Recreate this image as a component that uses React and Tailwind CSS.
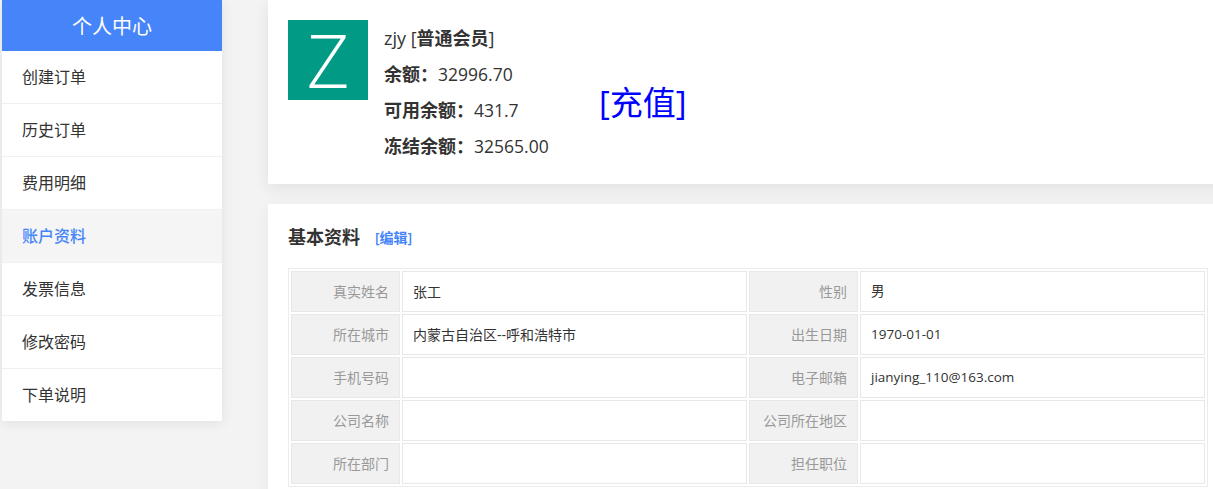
import React from "react";

const menuItems = ["创建订单", "历史订单", "费用明细", "账户资料", "发票信息", "修改密码", "下单说明"];

const rows = [
  ["真实姓名", "张工", "性别", "男"],
  ["所在城市", "内蒙古自治区--呼和浩特市", "出生日期", "1970-01-01"],
  ["手机号码", "", "电子邮箱", "jianying_110@163.com"],
  ["公司名称", "", "公司所在地区", ""],
  ["所在部门", "", "担任职位", ""],
];

const App = () => {
  return (
    <div className="h-[489px] overflow-hidden bg-[#f3f3f3] flex items-start pl-[2px] text-[#333] font-['Open_Sans','Noto_Sans_CJK_SC',sans-serif]">
      {/* Sidebar */}
      <div className="w-[220px] shrink-0 bg-white shadow-[0_2px_12px_rgba(0,0,0,0.08)]">
        <div className="h-[51px] pt-0.5 bg-[#4585f9] text-white text-[20px] flex items-center justify-center">个人中心</div>
        {menuItems.map((item, i) => (
          <div
            key={item}
            className={`pl-5 flex items-center text-[16px] border-[#f0f0f0] ${i < menuItems.length - 1 ? "h-[53px] border-b-[1px]" : "h-[52px]"} ${item === "账户资料" ? "bg-[#f5f5f5] text-[#4585f9] font-medium" : ""}`}
          >
            {item}
          </div>
        ))}
      </div>

      {/* Main */}
      <div className="ml-[46px] w-[960px] shrink-0">
        <div className="h-[184px] bg-white shadow-[0_4px_16px_rgba(0,0,0,0.08)] px-5 pt-5 flex">
          <div className="w-20 h-20 bg-[#009a85] text-white text-[74px] font-light flex items-center justify-center leading-none">Z</div>
          <div className="ml-4 w-[215px] text-[18px] leading-[36px]">
            <div>zjy [<span className="font-semibold">普通会员</span>]</div>
            <div className="font-semibold">余额：<span className="text-[17.5px] font-normal leading-none">32996.70</span></div>
            <div className="font-semibold">可用余额：<span className="text-[17.5px] font-normal leading-none">431.7</span></div>
            <div className="font-semibold">冻结余额：<span className="text-[17.5px] font-normal leading-none">32565.00</span></div>
          </div>
          <div className="mt-[59px] text-[33px] leading-[48px] text-[#0000ff]">[充值]</div>
        </div>

        <div className="mt-5 h-[300px] bg-white shadow-[0_4px_16px_rgba(0,0,0,0.05)] px-5">
          <div className="h-[64px] pt-0.5 flex items-center">
            <span className="text-[18px] font-semibold">基本资料</span>
            <span className="ml-[15px] text-[14px] text-[#4585f9] font-semibold">[编辑]</span>
          </div>
          <table className="w-[920px] table-fixed border-separate border-spacing-[2px] border border-[#ececec] text-[14px]">
            <colgroup>
              <col className="w-[109px]" />
              <col className="w-[345px]" />
              <col className="w-[109px]" />
              <col className="w-[345px]" />
            </colgroup>
            <tbody>
              {rows.map((row) => (
                <tr key={row[0]} className="h-[41px]">
                  <td className="bg-[#f1f1f1] border border-[#e8e8e8] pr-2.5 text-right text-[#999]">{row[0]}</td>
                  <td className="border border-[#e8e8e8] px-2.5">{row[1]}</td>
                  <td className="bg-[#f1f1f1] border border-[#e8e8e8] pr-2.5 text-right text-[#999]">{row[2]}</td>
                  <td className="border border-[#e8e8e8] px-2.5 text-[13.5px]">{row[3]}</td>
                </tr>
              ))}
            </tbody>
          </table>
        </div>
      </div>
    </div>
  );
};

export default App;
